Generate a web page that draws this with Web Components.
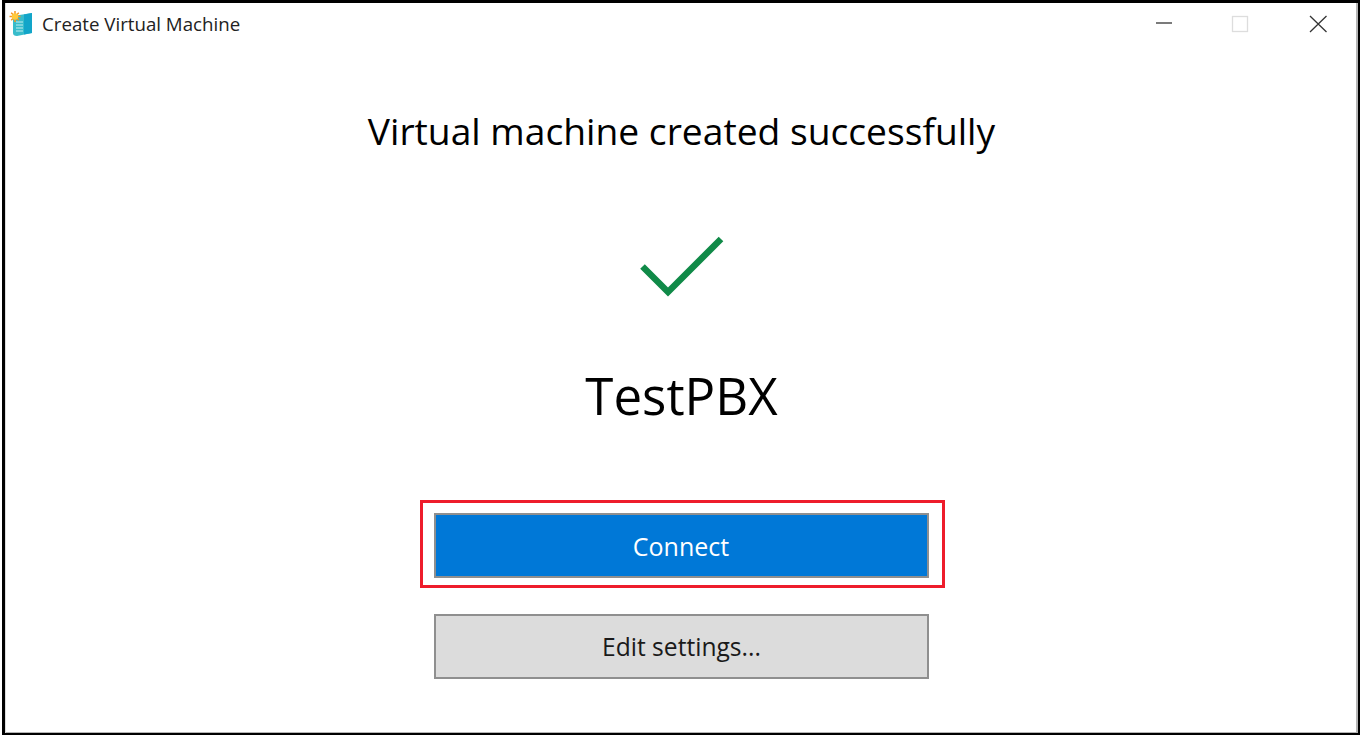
<!DOCTYPE html>
<html>
<head>
<meta charset="utf-8">
<title>Create Virtual Machine</title>
<style>
  html, body { margin: 0; height: 100%; background: #fff; }
  body { font-family: "Open Sans", "Noto Sans", "Liberation Sans", sans-serif; overflow: hidden; }
</style>
</head>
<body>
<vm-window>
  <vm-titlebar>Create Virtual Machine</vm-titlebar>
  <vm-success name="TestPBX">Virtual machine created successfully</vm-success>
</vm-window>

<script>
  class VmWindow extends HTMLElement {
    constructor() {
      super();
      this.attachShadow({ mode: 'open' });
    }

    connectedCallback() {
      this.shadowRoot.innerHTML = `
        <style>
          :host {
            display: flex;
            flex-direction: column;
            box-sizing: border-box;
            width: 1358px;
            height: 735px;
            margin: 0 0 0 2px;
            border: 3px solid #000;
            border-bottom-width: 2px;
            border-right-width: 2px;
            background: #fff;
            box-shadow: inset 1px 0 0 #ddd, inset -2px -1px 0 #b4b4b4;
          }
        </style>
        <slot></slot>
      `;
    }
  }

  class VmTitlebar extends HTMLElement {
    constructor() {
      super();
      this.attachShadow({ mode: 'open' });
    }

    connectedCallback() {
      this.shadowRoot.innerHTML = `
        <style>
          :host {
            display: flex;
            align-items: center;
            flex: none;
            height: 42px;
            padding-left: 4px;
            font-size: 18.7px;
            color: #222;
          }
          .icon { flex: none; width: 24px; height: 26px; margin-right: 9px; }
          .title { flex: 1; margin-top: -1px; white-space: nowrap; }
          .buttons { display: flex; align-items: center; }
          .buttons svg { display: block; flex: none; width: 78px; height: 42px; }
        </style>
        <svg class="icon" viewBox="0 0 24 26">
          <path d="M4 5 L23 2 V22 L8 25 Q4 25 4 22 Z" fill="#38bccb"/>
          <path d="M15 3.500 L23 2 V22 L15 23.500 Z" fill="#12a5c9"/>
          <path d="M7 11 H14 M7 14 H14 M7 17 H14 M7 20 H14" stroke="#c4eef2" stroke-width="1.200"/>
          <path d="M6 0 V11 M0.500 5.500 H11.500 M2.200 1.700 L9.800 9.300 M9.800 1.700 L2.200 9.300" stroke="#f7941e" stroke-width="1.500"/>
          <circle cx="6" cy="5.500" r="3.200" fill="#ffc93c"/>
        </svg>
        <span class="title"><slot></slot></span>
        <div class="buttons">
          <svg viewBox="0 0 78 42"><path d="M32 20 H48" stroke="#333" stroke-width="1.300"/></svg>
          <svg viewBox="0 0 78 42"><rect x="30.500" y="13.500" width="15" height="15" fill="none" stroke="#ddd" stroke-width="1.300"/></svg>
          <svg viewBox="0 0 78 42"><path d="M30 13 L46.500 29 M46.500 13 L30 29" stroke="#333" stroke-width="1.300"/></svg>
        </div>
      `;
    }
  }

  class VmSuccess extends HTMLElement {
    constructor() {
      super();
      this.attachShadow({ mode: 'open' });
    }

    connectedCallback() {
      const name = this.getAttribute('name');

      this.shadowRoot.innerHTML = `
        <style>
          :host {
            display: flex;
            flex-direction: column;
            align-items: center;
            flex: 1;
            color: #000;
          }
          .heading { margin: 58px 0 0; font-size: 37.2px; line-height: 56px; font-weight: 400; white-space: nowrap; }
          .check { display: block; width: 84px; height: 62px; margin-top: 76px; }
          .name { margin: 61px 0 0; font-size: 51px; line-height: 74px; font-weight: 400; }
          .highlight {
            box-sizing: border-box;
            width: 525px;
            height: 88px;
            margin: 68px 0 0 1px;
            padding: 10px 11px;
            border: 3px solid #ee1c2b;
          }
        </style>
        <h1 class="heading"><slot></slot></h1>
        <svg class="check" viewBox="0 0 84 62">
          <path d="M2.500 31.500 L28 57 L81 4" fill="none" stroke="#108a48" stroke-width="6.500"/>
        </svg>
        <div class="name">${name}</div>
        <div class="highlight"><vm-button primary>Connect</vm-button></div>
        <vm-button style="margin-top: 26px; font-size: 24.6px">Edit settings...</vm-button>
      `;
    }
  }

  class VmButton extends HTMLElement {
    constructor() {
      super();
      this.attachShadow({ mode: 'open' });
    }

    connectedCallback() {
      const bg = this.hasAttribute('primary') ? '#0078d7' : '#dcdcdc';
      const fg = this.hasAttribute('primary') ? '#fff' : '#1a1a1a';

      this.shadowRoot.innerHTML = `
        <style>
          :host {
            display: flex;
            align-items: center;
            justify-content: center;
            box-sizing: border-box;
            width: 495px;
            height: 65px;
            border: 2px solid #8f8f8f;
            background: ${bg};
            color: ${fg};
            font-size: 25px;
          }
        </style>
        <slot></slot>
      `;
    }
  }

  customElements.define('vm-window', VmWindow);
  customElements.define('vm-titlebar', VmTitlebar);
  customElements.define('vm-success', VmSuccess);
  customElements.define('vm-button', VmButton);
</script>
</body>
</html>
